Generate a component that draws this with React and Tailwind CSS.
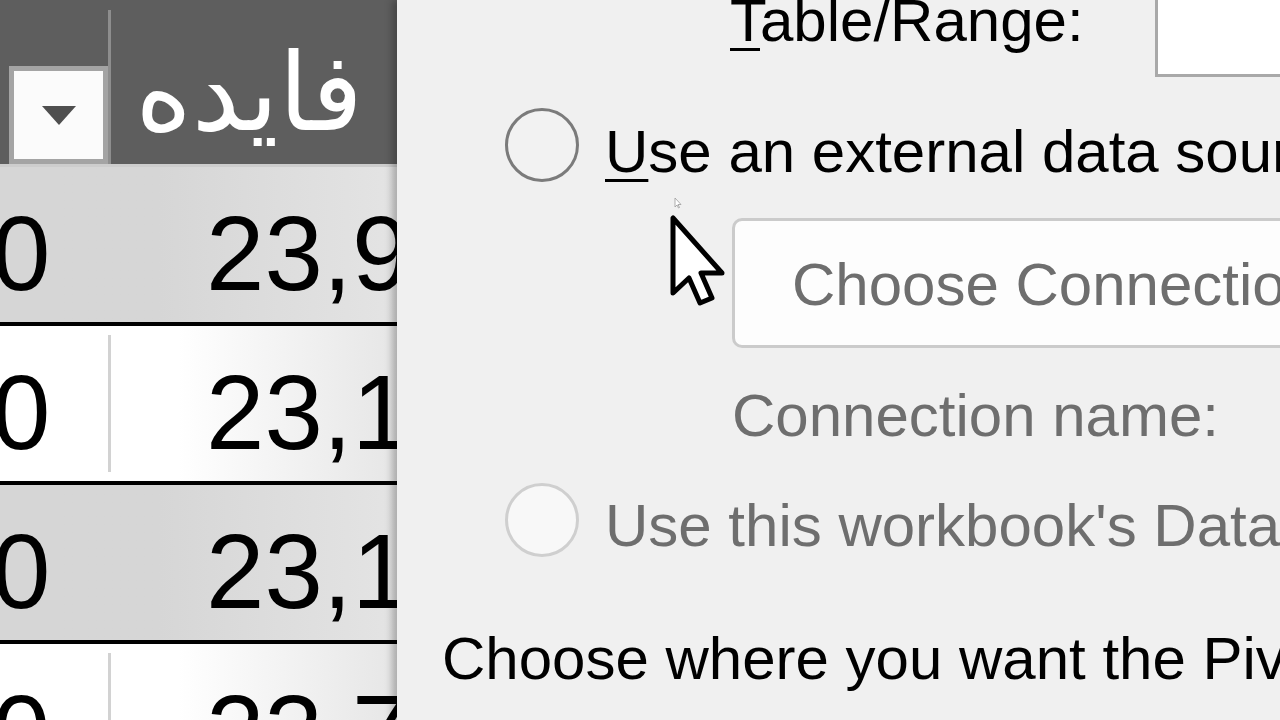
import React from 'react'

const rows = [
  { gray: true, a: '0', b: '23,9' },
  { gray: false, a: '0', b: '23,1' },
  { gray: true, a: '0', b: '23,1' },
  { gray: false, a: '0', b: '23,7' },
]

function SheetRow({ gray, a, b, last }) {
  return (
    <div
      className={
        'flex h-[159px] shrink-0 items-center pt-[18px] ' +
        (last ? '' : 'border-b-4 border-black ') +
        (gray
          ? 'bg-linear-to-r from-[#d6d6d6] from-40% to-[#e4e4e4]'
          : 'bg-linear-to-r from-white from-45% to-[#e6e6e6]')
      }
    >
      <div
        className={
          'h-full w-[111px] shrink-0 flex items-center -mt-[18px] pt-[18px] ' +
          (gray ? '' : 'border-r-[3px] border-[#d2d2d2]')
        }
      >
        <span className="-ml-[8px]">{a}</span>
      </div>
      <span className="pl-[95px] whitespace-nowrap">{b}</span>
    </div>
  )
}

function Sheet() {
  return (
    <div
      className="flex h-full w-[397px] shrink-0 flex-col overflow-hidden text-[105px] leading-none text-black"
      style={{ fontFamily: '"Liberation Sans", Arial, sans-serif' }}
    >
      {/* header cell with filter button */}
      <div className="relative flex h-[167px] shrink-0 items-end border-b-[3px] border-[#cdcdcd] bg-[#5e5e5e]">
        <div className="ml-[9px] flex h-[98px] w-[99px] items-center justify-center border-[5px] border-[#a4a4a4] bg-[#fbfbfb]">
          <svg width="34" height="19" viewBox="0 0 34 19">
            <path d="M0 0 H34 L17 19 Z" fill="#4f4f4f" />
          </svg>
        </div>
        <div className="h-[154px] w-[3px] self-end bg-[#8e8e8e]" />
        <div
          className="flex h-full flex-1 items-center justify-end pr-[34px] pt-[22px] text-[108px] text-white"
          style={{ fontFamily: '"DejaVu Sans", sans-serif' }}
        >
          <span dir="rtl">فایده</span>
        </div>
      </div>
      {rows.map((r, i) => (
        <SheetRow key={i} {...r} last={i === rows.length - 1} />
      ))}
    </div>
  )
}

function Radio({ disabled }) {
  return (
    <div
      className={
        'h-[74px] w-[74px] shrink-0 rounded-full border-[3px] ' +
        (disabled ? 'border-[#cfcfcf] bg-[#f8f8f8]' : 'border-[#7b7b7b] bg-[#f2f2f2]')
      }
    />
  )
}

function Dialog() {
  return (
    <div
      className="relative h-full flex-1 overflow-hidden bg-[#f0f0f0] text-[60px] leading-none text-black shadow-[-5px_0_7px_rgba(0,0,0,0.25)]"
      style={{ fontFamily: '"Liberation Sans", Arial, sans-serif' }}
    >
      {/* Table/Range row */}
      <div className="flex h-[77px] items-start">
        <div className="ml-[333px] -mt-[9px] w-[425px] shrink-0 whitespace-nowrap">
          <span className="underline decoration-[3px] underline-offset-[7px]">T</span>able/Range:
        </div>
        <div className="h-[77px] w-[300px] shrink-0 border-b-[3px] border-l-[3px] border-[#a9a9a9] bg-white" />
      </div>

      {/* external data source */}
      <div className="mt-[31px] flex items-start pl-[108px]">
        <Radio />
        <div className="ml-[26px] mt-[14px] whitespace-nowrap">
          <span className="underline decoration-[3px] underline-offset-[7px]">U</span>se an external data source
        </div>
      </div>

      {/* choose connection button */}
      <div className="mt-[36px] pl-[335px]">
        <div className="flex h-[130px] w-[700px] items-center rounded-[10px] border-[3px] border-[#cbcbcb] bg-[#fdfdfd] pl-[57px] pt-[4px] text-[#6e6e6e] whitespace-nowrap">
          Choose Connection...
        </div>
      </div>

      <div className="mt-[38px] pl-[335px] whitespace-nowrap text-[#6e6e6e]">Connection name:</div>

      {/* data model */}
      <div className="mt-[37px] flex items-start pl-[108px]">
        <Radio disabled />
        <div className="ml-[26px] mt-[13px] whitespace-nowrap text-[#6e6e6e]">
          Use this workbook's Data Model
        </div>
      </div>

      <div className="mt-[72px] pl-[45px] whitespace-nowrap">
        Choose where you want the PivotTable report to be placed
      </div>

      {/* mouse pointer */}
      <svg className="absolute left-[277px] top-[197px]" width="8" height="12" viewBox="0 0 8 12">
        <path d="M1 1 V10 L3 8 L4.5 11 L5.5 10.5 L4 7.5 H7 Z" fill="white" stroke="#9a9a9a" strokeWidth="0.8" />
      </svg>
      <svg className="absolute left-[273px] top-[215px]" width="58" height="92" viewBox="0 0 58 92">
        <path
          d="M3 3 L3 78 L19 63 L30 88 L42 83 L31 58 L52 58 Z"
          fill="white"
          stroke="black"
          strokeWidth="5"
          strokeLinejoin="round"
        />
      </svg>
    </div>
  )
}

export default function App() {
  return (
    <div className="flex h-[720px] w-[1280px] overflow-hidden bg-[#f0f0f0]">
      <Sheet />
      <Dialog />
    </div>
  )
}
